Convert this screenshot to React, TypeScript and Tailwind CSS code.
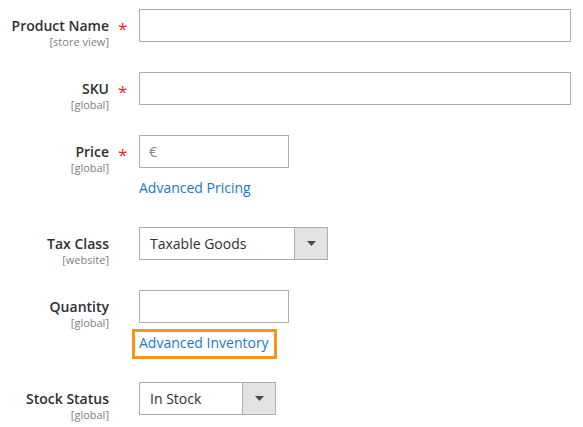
import React from "react";

function Arrow() {
  return (
    <svg width="9" height="5" viewBox="0 0 9 5" className="block">
      <path d="M0 0h9L4.5 5z" fill="#514943" />
    </svg>
  );
}

function Label({ text, scope, required }: { text: string; scope: string; required?: boolean }) {
  return (
    <div className="flex h-[33px] shrink-0">
      <div className="w-[109px] pt-[7px] text-right">
        <div className="text-[14px] leading-[19px] font-semibold text-[#303030]">{text}</div>
        <div className="text-[11px] leading-[13px] text-[#808080]">{scope}</div>
      </div>
      <div className="w-[30px] pl-[9px] pt-[11px]">
        {required && <span className="block text-[17px] leading-none text-[#e22626]">*</span>}
      </div>
    </div>
  );
}

function Select({ value, width }: { value: string; width: string }) {
  return (
    <div className={`flex h-[33px] border border-[#adadad] bg-white ${width}`}>
      <div className="flex flex-1 items-center pl-[10px] text-[14px] text-[#303030]">{value}</div>
      <div className="flex w-[33px] items-center justify-center border-l border-[#adadad] bg-[#e3e3e3]">
        <Arrow />
      </div>
    </div>
  );
}

export default function App() {
  return (
    <div className="min-h-screen bg-white pt-[9px] font-['Open_Sans',sans-serif]">
      {/* Product Name */}
      <div className="mb-[30px] flex">
        <Label text="Product Name" scope="[store view]" required />
        <div className="h-[33px] w-[432px] border border-[#adadad] bg-white" />
      </div>

      {/* SKU */}
      <div className="mb-[30px] flex">
        <Label text="SKU" scope="[global]" required />
        <div className="h-[33px] w-[432px] border border-[#adadad] bg-white" />
      </div>

      {/* Price */}
      <div className="mb-[29px] flex">
        <Label text="Price" scope="[global]" required />
        <div>
          <div className="flex h-[33px] w-[150px] items-center border border-[#adadad] bg-white pl-[9px] text-[14px] text-[#858585]">
            €
          </div>
          <a href="#" className="mt-[10px] block text-[14px] leading-[20px] text-[#1979c3]">
            Advanced Pricing
          </a>
        </div>
      </div>

      {/* Tax Class */}
      <div className="mb-[30px] flex">
        <Label text="Tax Class" scope="[website]" />
        <Select value="Taxable Goods" width="w-[189px]" />
      </div>

      {/* Quantity */}
      <div className="mb-[29px] flex">
        <Label text="Quantity" scope="[global]" />
        <div>
          <div className="h-[33px] w-[150px] border border-[#adadad] bg-white" />
          <div className="relative mt-[10px] w-fit">
            <a href="#" className="block text-[14px] leading-[20px] text-[#1979c3]">
              Advanced Inventory
            </a>
            <span className="pointer-events-none absolute -top-[4px] -bottom-[6px] -left-[7px] -right-[8px] border-[3px] border-[#f7941e]" />
          </div>
        </div>
      </div>

      {/* Stock Status */}
      <div className="flex">
        <Label text="Stock Status" scope="[global]" />
        <Select value="In Stock" width="w-[137px]" />
      </div>
    </div>
  );
}
